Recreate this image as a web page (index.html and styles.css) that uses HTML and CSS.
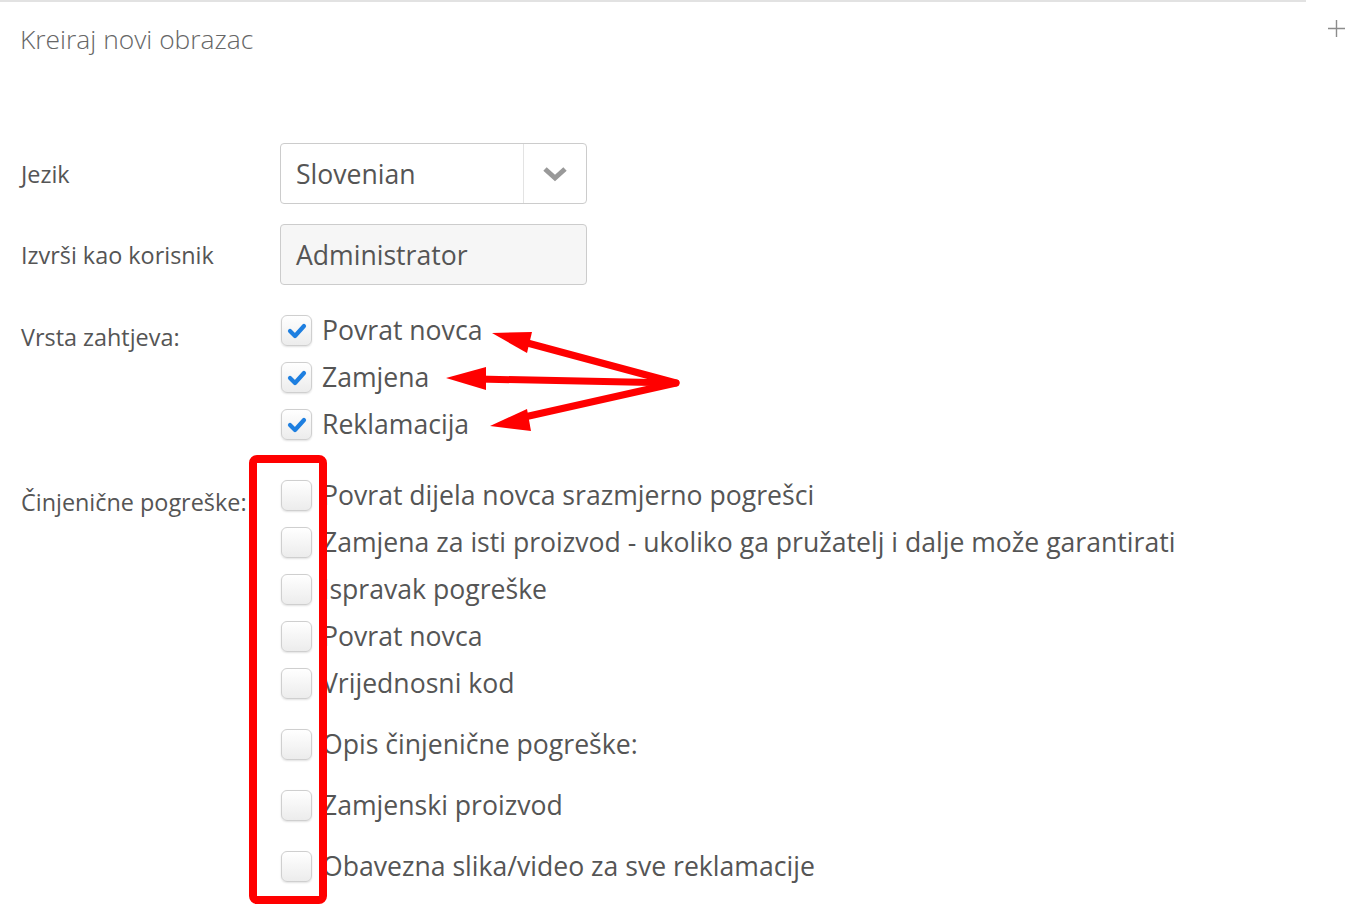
FILE: index.html
```html
<!DOCTYPE html>
<html lang="hr">
<head>
<meta charset="utf-8">
<title>Kreiraj novi obrazac</title>
<link rel="stylesheet" href="styles.css">
</head>
<body>
<div class="page">
  <div class="panel">
    <div class="panel-head">
      <h1 class="title">Kreiraj novi obrazac</h1>
    </div>
    <form class="form">
      <div class="row row-field">
        <div class="label">Jezik</div>
        <div class="controls">
          <div class="select">
            <span class="select-value">Slovenian</span>
            <span class="select-arrow">
              <svg width="26" height="16" viewBox="0 0 26 16"><polyline points="3,3 13,12 23,3" fill="none" stroke="#999" stroke-width="5" stroke-linejoin="miter"/></svg>
            </span>
          </div>
        </div>
      </div>
      <div class="row row-field">
        <div class="label">Izvrši kao korisnik</div>
        <div class="controls">
          <div class="input">Administrator</div>
        </div>
      </div>
      <div class="row row-check row-types">
        <div class="label label-check">Vrsta zahtjeva:</div>
        <div class="controls checks">
          <label class="check"><span class="box checked"><svg width="20" height="16" viewBox="0 0 20 16"><polyline points="3,8 8,13 17,3" fill="none" stroke="#1e7fe0" stroke-width="4.2" stroke-linecap="round" stroke-linejoin="round"/></svg></span><span class="check-text">Povrat novca</span></label>
          <label class="check"><span class="box checked"><svg width="20" height="16" viewBox="0 0 20 16"><polyline points="3,8 8,13 17,3" fill="none" stroke="#1e7fe0" stroke-width="4.2" stroke-linecap="round" stroke-linejoin="round"/></svg></span><span class="check-text">Zamjena</span></label>
          <label class="check"><span class="box checked"><svg width="20" height="16" viewBox="0 0 20 16"><polyline points="3,8 8,13 17,3" fill="none" stroke="#1e7fe0" stroke-width="4.2" stroke-linecap="round" stroke-linejoin="round"/></svg></span><span class="check-text">Reklamacija</span></label>
        </div>
      </div>
      <div class="row row-check row-facts">
        <div class="label label-check">Činjenične pogreške:</div>
        <div class="controls checks">
          <label class="check"><span class="box"></span><span class="check-text">Povrat dijela novca srazmjerno pogrešci</span></label>
          <label class="check"><span class="box"></span><span class="check-text">Zamjena za isti proizvod - ukoliko ga pružatelj i dalje može garantirati</span></label>
          <label class="check"><span class="box"></span><span class="check-text">Ispravak pogreške</span></label>
          <label class="check"><span class="box"></span><span class="check-text">Povrat novca</span></label>
          <label class="check"><span class="box"></span><span class="check-text">Vrijednosni kod</span></label>
        </div>
      </div>
      <div class="row row-check row-single">
        <div class="label"></div>
        <div class="controls checks">
          <label class="check"><span class="box"></span><span class="check-text">Opis činjenične pogreške:</span></label>
        </div>
      </div>
      <div class="row row-check row-single">
        <div class="label"></div>
        <div class="controls checks">
          <label class="check"><span class="box"></span><span class="check-text">Zamjenski proizvod</span></label>
        </div>
      </div>
      <div class="row row-check row-single">
        <div class="label"></div>
        <div class="controls checks">
          <label class="check"><span class="box"></span><span class="check-text">Obavezna slika/video za sve reklamacije</span></label>
        </div>
      </div>
    </form>
  </div>
  <div class="side">
    <svg class="plus" width="17" height="17" viewBox="0 0 17 17"><path d="M8.5 0V17M0 8.5H17" stroke="#8c8c8c" stroke-width="1.4"/></svg>
  </div>
</div>
<svg class="annotations" width="1353" height="919" viewBox="0 0 1353 919">
  <g fill="#ff0000" stroke="none">
    <polygon points="492,333 532,332 527,353"/>
    <polygon points="446,378 486,367 486,390"/>
    <polygon points="490,426 527,409 531,431"/>
  </g>
  <g fill="none" stroke="#ff0000" stroke-width="7" stroke-linecap="round" stroke-linejoin="round">
    <polyline points="520,341 676,383 520,418"/>
    <line x1="676" y1="383" x2="478" y2="379"/>
  </g>
  <rect x="253" y="459" width="70" height="441" rx="4" ry="4" fill="none" stroke="#ff0000" stroke-width="8"/>
</svg>
</body>
</html>
```

FILE: styles.css
```css
html, body {
  margin: 0;
  padding: 0;
  background: #ffffff;
}
body {
  font-family: "Open Sans", "Noto Sans", sans-serif;
  color: #555555;
  width: 1353px;
  height: 919px;
  overflow: hidden;
  position: relative;
}
.page {
  display: flex;
  align-items: flex-start;
}
.panel {
  width: 1306px;
  border-top: 2px solid #e2e2e2;
  box-sizing: border-box;
}
.side {
  flex: 1;
  display: flex;
  justify-content: flex-end;
  padding: 20px 8px 0 0;
}
.plus {
  display: block;
}
.panel-head {
  height: 76px;
  padding: 0 20px;
  display: flex;
  align-items: center;
  padding-bottom: 2px;
  box-sizing: border-box;
}
.title {
  margin: 0;
  font-weight: 300;
  font-size: 26.4px;
  color: #666666;
  line-height: 40px;
}
.form {
  padding: 65px 0 0 20px;
}
.row {
  display: flex;
}
.label {
  width: 260px;
  flex: none;
  font-size: 23.4px;
  color: #555555;
  padding-left: 1px;
  box-sizing: border-box;
  line-height: 32px;
}
.row-field {
  align-items: center;
  margin-bottom: 20px;
}
.row-field .label {
  padding-top: 1px;
}
.row-types {
  margin-top: 30px;
}
.label-check {
  padding-top: 6px;
}
.select, .input {
  width: 307px;
  height: 61px;
  box-sizing: border-box;
  border: 1px solid #cccccc;
  border-radius: 4px;
  font-size: 26.6px;
  color: #555555;
  display: flex;
  align-items: center;
}
.select {
  background: #ffffff;
}
.select-value {
  flex: 1;
  padding-left: 15px;
}
.select-arrow {
  width: 62px;
  align-self: stretch;
  border-left: 1px solid #e3e3e3;
  display: flex;
  align-items: center;
  justify-content: center;
}
.input {
  background: #f6f6f6;
  padding-left: 15px;
}
.checks {
  display: flex;
  flex-direction: column;
  gap: 16px;
}
.row-facts {
  margin-top: 40px;
}
.row-single {
  margin-top: 30px;
}
.check {
  display: flex;
  align-items: center;
  height: 31px;
  padding-left: 1px;
}
.box {
  width: 31px;
  height: 31px;
  box-sizing: border-box;
  border: 1px solid #cfcfcf;
  border-radius: 6px;
  background: linear-gradient(#ffffff, #ececec);
  box-shadow: 0 1px 2px rgba(0, 0, 0, 0.12);
  display: flex;
  align-items: center;
  justify-content: center;
  flex: none;
}
.check-text {
  margin-left: 10px;
  font-size: 26.6px;
  color: #555555;
  white-space: nowrap;
  line-height: 31px;
}
.annotations {
  position: absolute;
  left: 0;
  top: 0;
  pointer-events: none;
}
```
